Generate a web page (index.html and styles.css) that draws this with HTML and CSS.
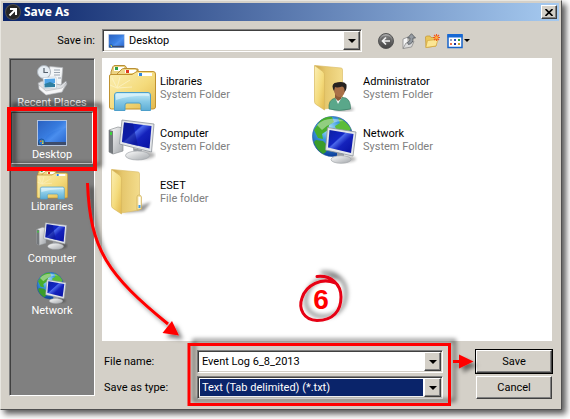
FILE: index.html
```html
<!DOCTYPE html>
<html lang="en">
<head>
<meta charset="utf-8">
<title>Save As</title>
<link rel="stylesheet" href="styles.css">
</head>
<body>
<svg class="defs" aria-hidden="true">
  <defs>
    <linearGradient id="gold" x1="0" y1="0" x2="1" y2="1"><stop offset="0" stop-color="#fbefb4"/><stop offset=".55" stop-color="#f4db7c"/><stop offset="1" stop-color="#e2b84e"/></linearGradient>
    <linearGradient id="goldBack" x1="0" y1="0" x2="1" y2="0"><stop offset="0" stop-color="#cda548"/><stop offset=".4" stop-color="#e6c86e"/><stop offset="1" stop-color="#f3dc8c"/></linearGradient>
    <linearGradient id="aqua" x1="0" y1="0" x2="0" y2="1"><stop offset="0" stop-color="#c9ecf8"/><stop offset=".5" stop-color="#86c9e6"/><stop offset="1" stop-color="#5dacd4"/></linearGradient>
    <linearGradient id="screen" x1="0" y1="0" x2="1" y2="1"><stop offset="0" stop-color="#0a1ea0"/><stop offset=".38" stop-color="#1226c4"/><stop offset=".42" stop-color="#4a68ea"/><stop offset=".6" stop-color="#1422bc"/><stop offset="1" stop-color="#0610a0"/></linearGradient>
    <linearGradient id="metal" x1="0" y1="0" x2="1" y2="1"><stop offset="0" stop-color="#fdfdfd"/><stop offset="1" stop-color="#a4a8ac"/></linearGradient>
    <radialGradient id="ocean" cx=".4" cy=".3" r=".7"><stop offset="0" stop-color="#b8e8fa"/><stop offset=".4" stop-color="#3c9be0"/><stop offset="1" stop-color="#0c3f9c"/></radialGradient>
    <linearGradient id="desk" x1="0" y1="0" x2="1" y2="1"><stop offset="0" stop-color="#1f55b8"/><stop offset=".45" stop-color="#2f74dc"/><stop offset=".6" stop-color="#4a8eee"/><stop offset="1" stop-color="#2560c8"/></linearGradient>
    <radialGradient id="orb" cx=".5" cy=".2" r=".8"><stop offset="0" stop-color="#bdbdbd"/><stop offset="1" stop-color="#3c3c3c"/></radialGradient>
    <filter id="soft" x="-30%" y="-30%" width="160%" height="160%"><feGaussianBlur stdDeviation="1.5"/></filter>
    <filter id="drop" filterUnits="userSpaceOnUse" x="0" y="0" width="570" height="419"><feDropShadow dx="4" dy="4" stdDeviation="2" flood-color="#000" flood-opacity=".5"/></filter>
    <filter id="lift" filterUnits="userSpaceOnUse" x="0" y="0" width="570" height="419"><feDropShadow dx="5" dy="-4" stdDeviation="2" flood-color="#000" flood-opacity=".5"/></filter>

    <symbol id="i-libraries" viewBox="0 0 48 48">
      <path d="M3 8 5 2.500Q5.500 1.500 7 1.500H16Q17.500 1.500 18 3L19 5H30V40H3Z" fill="#ecd383" stroke="#b98f34"/>
      <rect x="6" y="3" width="10" height="4" fill="#fff"/><rect x="7" y="3" width="3" height="3" fill="#2ca04a"/>
      <path d="M8 11 13 6Q14 4.500 16 4.500H27Q29 4.500 30 7L31 8H41V40H8Z" fill="#efd88a" stroke="#b98f34"/>
      <rect x="17" y="6" width="11" height="3" fill="#fff"/><rect x="18" y="6" width="3" height="3" fill="#e03a20"/>
      <path d="M1.500 12Q1.500 10.500 3 10.500H24L28 8Q29 7.500 31 7.500H45Q47.500 7.500 47.500 10V43Q47.500 45 45 45H3.500Q1.500 45 1.500 43Z" fill="url(#gold)" stroke="#c0922f"/>
      <rect x="30" y="9" width="14" height="3" fill="#fff"/><rect x="31" y="9" width="3" height="3" fill="#2f86e0"/>
      <path d="M9 24 4 14M9 24 12 13M9 24 22 16M9 24 24 23M9 24 2 21" stroke="#fffbe0" stroke-width="1" opacity=".5"/>
      <path d="M6.500 46V31Q6.500 28.500 9 28.500H40Q42.500 28.500 42.500 31V46.500H33V41Q33 39 31 39H19Q17 39 17 41V46.500H6.500Z" fill="url(#aqua)" stroke="#4d9fca"/>
      <path d="M8 36V30H41V32Q24 31 8 36Z" fill="#e8f8fd" opacity=".6"/>
    </symbol>

    <symbol id="i-computer" viewBox="0 0 48 48">
      <ellipse cx="36" cy="39" rx="11" ry="4" fill="#000" opacity=".3" filter="url(#soft)"/>
      <path d="M1 14 10 11 15 12V35L5 38 1 36Z" fill="url(#metal)" stroke="#8c9094" stroke-width=".7"/>
      <path d="M1 14 5 15V38L1 36Z" fill="#74787c"/><rect x="2" y="16" width="2" height="3" fill="#3bd23b"/>
      <path d="M25 32 34 34 33 39H26Z" fill="#989ca2"/>
      <ellipse cx="29.500" cy="39.500" rx="12" ry="4.500" fill="url(#metal)" stroke="#a4a8ac" stroke-width=".7"/>
      <path d="M14 4 46 8 43.500 36 11.500 28Z" fill="#e3e6ea" stroke="#8d9399" stroke-width=".8"/>
      <path d="M16 6.500 43.500 10 41.500 32.500 14 26Z" fill="url(#screen)"/>
      <path d="M16 6.500 25 7.600 30 30 14 26Z" fill="#0b1690" opacity=".55"/>
    </symbol>

    <symbol id="i-network" viewBox="0 0 48 48">
      <circle cx="21.500" cy="20.500" r="20" fill="url(#ocean)" stroke="#1b4f9c" stroke-width=".6"/>
      <path d="M9 5Q15 0 21 1L23 6 18 9 17 14 11 18 12 23 7 22 3 14Z" fill="#48ae2c"/>
      <path d="M27 2Q36 5 40 13L36 17 30 14 26 16 24 10 29 7Z" fill="#5cbc38"/>
      <path d="M5 24 12 25 17 30 15 36 12 38Q5 33 3 26Z" fill="#3a9c2a"/>
      <path d="M6 9Q16 -1 33 5Q20 5 11 14Z" fill="#fff" opacity=".4"/>
      <ellipse cx="36" cy="43" rx="9" ry="3" fill="#000" opacity=".3" filter="url(#soft)"/>
      <path d="M26 36 33 38 33 43H26Z" fill="#989ca2"/>
      <ellipse cx="30" cy="43.500" rx="10" ry="3.800" fill="url(#metal)" stroke="#a4a8ac" stroke-width=".7"/>
      <path d="M16.500 11.500 45 16 42 40 14.500 34Z" fill="#e3e6ea" stroke="#8d9399" stroke-width=".8"/>
      <path d="M18.500 14 42.500 18 40 37 17 31.500Z" fill="url(#screen)"/>
    </symbol>

    <symbol id="i-folder" viewBox="0 0 48 48">
      <path d="M14 45 31 38 43 34 36 43Z" fill="#000" opacity=".4" filter="url(#soft)"/>
      <path d="M4 1.500 30 4Q31.500 4 31.500 6V42L13 45Z" fill="url(#goldBack)" stroke="#dcbf6a" stroke-width=".7"/>
      <path d="M29 29Q29 27 31 27T33.500 29V41L29 42Z" fill="#f6e6a6" stroke="#c9a44c" stroke-width=".6"/>
      <rect x="30.500" y="29" width="2" height="10" fill="#fff"/><rect x="30.500" y="37" width="2" height="3" fill="#3f9bea"/>
      <path d="M3.500 1.500 12 7.500Q13.500 9 13.500 11V46L4.500 40Q3.500 39 3.500 37Z" fill="url(#gold)" stroke="#d9b95e" stroke-width=".7"/>
    </symbol>

    <symbol id="i-user" viewBox="0 0 48 48">
      <path d="M4 1.500 30 4Q31.500 4 31.500 6V42L13 45Z" fill="url(#goldBack)" stroke="#dcbf6a" stroke-width=".7"/>
      <path d="M3.500 1.500 12 7.500Q13.500 9 13.500 11V46L4.500 40Q3.500 39 3.500 37Z" fill="url(#gold)" stroke="#d9b95e" stroke-width=".7"/>
      <ellipse cx="33" cy="45" rx="10" ry="2.500" fill="#000" opacity=".3" filter="url(#soft)"/>
      <path d="M18 45Q17 36 24 34L29 33 35 34Q40 37 39.500 45Q28 48 18 45Z" fill="#5aa78a" stroke="#34745c" stroke-width=".6"/>
      <path d="M24 33 27 40 31 33Z" fill="#f4f6f4"/>
      <path d="M24 29H32L30 35 27 37 24 34Z" fill="#8d5a38"/>
      <ellipse cx="28.500" cy="25.500" rx="5.700" ry="7.500" fill="#a97048"/>
      <path d="M22 25Q20 19 26 18.500Q33 17 35.500 20.500Q36 26 33.500 28Q34 23 31 22.500Q26 24 24 23L23 27Z" fill="#262220"/>
    </symbol>

    <symbol id="i-desktop" viewBox="0 0 32 32">
      <rect x="1.500" y="4.500" width="29" height="25" fill="url(#desk)" stroke="#b4c4de"/>
      <path d="M2 5H30V12Q14 14 8 24H2Z" fill="#7cb2fa" opacity=".12"/>
      <rect x="2" y="26" width="28" height="3" fill="#3c4c6c"/>
      <circle cx="5.500" cy="26" r="3" fill="#2b7bd0" stroke="#103c78" stroke-width=".6"/>
      <path d="M4 24.500H5.500V26H4Z" fill="#f0682c"/><path d="M6 24.500H7.500V26H6Z" fill="#8fd04a"/><path d="M6 26.500H7.500V28H6Z" fill="#fcd638"/>
    </symbol>

    <symbol id="i-recent" viewBox="0 0 32 32">
      <rect x="13" y="3" width="13" height="19" fill="#f3f5f7" stroke="#b4b8bc" stroke-width=".7" transform="rotate(5 19 12)"/>
      <path d="M18 6H24M18 8.500H24M18 11H24M22 14H25" stroke="#9aa4b0"/>
      <circle cx="8" cy="8" r="6.500" fill="#e6edf3" stroke="#aab2ba"/>
      <path d="M8 4V8.500H12" fill="none" stroke="#55606c" stroke-width="1.200"/>
      <path d="M2 19 6 17 25 21 30 17 31 20 26 28 10 31 3 25Z" fill="#dfe1e4" stroke="#96999d" stroke-width=".7"/>
      <path d="M7 13.500 20 13 20.500 24 8 24.500Z" fill="#fff" stroke="#b8c4d0" stroke-width=".6"/>
      <path d="M8.500 15 19 14.500V19L8.500 21Z" fill="#4fa4e8"/><path d="M8.500 20 14 18 19 20V23L8.500 23.500Z" fill="#2f7ea0"/>
      <path d="M3 21 10 27 26 24 30 19 26 28 10 31 3 25Z" fill="#f6f6f7" stroke="#a6a9ad" stroke-width=".5"/>
    </symbol>
  </defs>
</svg>

<main class="window">
  <header class="titlebar">
    <svg class="app-icon" viewBox="0 0 16 16" aria-hidden="true"><circle cx="8" cy="8" r="8" fill="#4a4a4a"/><circle cx="8" cy="8" r="7" fill="#262626"/><path d="M5 5H11V11M11 5 4.500 11.500" fill="none" stroke="#fff" stroke-width="2"/></svg>
    <h1>Save As</h1>
    <button class="close" type="button" aria-label="Close"><svg viewBox="0 0 8 7"><path d="M.5 0 7.500 7M7.500 0 .5 7" stroke="#000" stroke-width="1.600"/></svg></button>
  </header>

  <form class="content">
    <div class="lookin">
      <label for="lookin">Save in:</label>
      <div class="combo combo-icon">
        <svg class="combo-pic" aria-hidden="true"><use href="#i-desktop"/></svg>
        <select id="lookin"><option>Desktop</option></select>
        <span class="drop" aria-hidden="true"></span>
      </div>
      <div class="tools">
        <button type="button" aria-label="Back"><svg viewBox="0 0 16 16"><circle cx="8" cy="8" r="7.500" fill="url(#orb)" stroke="#555"/><circle cx="8" cy="8" r="5.500" fill="#444" opacity=".5"/><path d="M12 8H5M8 4.500 4.500 8 8 11.500" fill="none" stroke="#f2f2f2" stroke-width="1.700"/></svg></button>
        <button type="button" aria-label="Up one level"><svg viewBox="0 0 16 16"><path d="M2 6 7 4V13.500L2 15.500Z" fill="#f4f4f4" stroke="#8a8a8a" stroke-width=".8"/><path d="M2 15.500 5 10 13 8.500 10.500 14Z" fill="#dcdcdc" stroke="#8a8a8a" stroke-width=".8"/><path d="M7.500 11.500Q12.500 10.500 12 5H14.500L10.500 .700 6.500 5H9Q9.500 8.500 6.500 9.500Z" fill="#959ba2" stroke="#50555a" stroke-width=".8"/></svg></button>
        <button type="button" aria-label="New folder"><svg viewBox="0 0 16 16"><path d="M1.500 4 2.500 3H6L7 4.500H12V13L2 14.500Z" fill="#eac65a" stroke="#c2932e" stroke-width=".7"/><path d="M3.500 7.500 14 6.500 12 13 1.800 14.500Z" fill="#fbe694" stroke="#d3a63c" stroke-width=".7"/><path d="M12.500 1V8M9 4.500H16M10 2 15 7M15 2 10 7" stroke="#f2581e" stroke-width="1.100"/><circle cx="12.500" cy="4.500" r="1.500" fill="#ffb03a"/></svg></button>
        <button class="view" type="button" aria-label="View menu"><svg viewBox="0 0 16 16"><rect x="1" y="2" width="14" height="12.500" fill="#fff" stroke="#1763c8" stroke-width="1.500"/><rect x=".5" y="1" width="15" height="3.500" fill="#1668d4"/><path d="M3 6H5V8H3Z" fill="#96a4c0"/><path d="M7 6H9V8H7Z" fill="#2a4ec4"/><path d="M11 6H13V8H11Z" fill="#2c9c40"/><path d="M3 10H5V12H3Z" fill="#e8744e"/><path d="M7 10H9V12H7Z" fill="#17309c"/><path d="M11 10H13V12H11Z" fill="#cf9c28"/></svg><span class="caret"></span></button>
      </div>
    </div>

    <nav class="places" aria-label="Places">
      <a href="#recent"><svg aria-hidden="true"><use href="#i-recent"/></svg>Recent Places</a>
      <a class="current" href="#desktop"><svg aria-hidden="true"><use href="#i-desktop"/></svg>Desktop</a>
      <a href="#libraries"><svg aria-hidden="true"><use href="#i-libraries"/></svg>Libraries</a>
      <a href="#computer"><svg aria-hidden="true"><use href="#i-computer"/></svg>Computer</a>
      <a href="#network"><svg aria-hidden="true"><use href="#i-network"/></svg>Network</a>
    </nav>

    <ul class="files">
      <li><svg aria-hidden="true"><use href="#i-libraries"/></svg><p>Libraries<small>System Folder</small></p></li>
      <li><svg aria-hidden="true"><use href="#i-user"/></svg><p>Administrator<small>System Folder</small></p></li>
      <li><svg aria-hidden="true"><use href="#i-computer"/></svg><p>Computer<small>System Folder</small></p></li>
      <li><svg aria-hidden="true"><use href="#i-network"/></svg><p>Network<small>System Folder</small></p></li>
      <li><svg aria-hidden="true"><use href="#i-folder"/></svg><p>ESET<small>File folder</small></p></li>
    </ul>

    <div class="fields">
      <label for="filename">File name:</label>
      <div class="combo">
        <input id="filename" type="text" value="Event Log 6_8_2013">
        <button class="drop" type="button" aria-label="Recent file names"></button>
      </div>
      <button class="action default" type="submit">Save</button>
      <label for="filetype">Save as type:</label>
      <div class="combo combo-active">
        <select id="filetype"><option>Text (Tab delimited) (*.txt)</option></select>
        <span class="drop" aria-hidden="true"></span>
      </div>
      <button class="action" type="button">Cancel</button>
    </div>
  </form>
</main>

<svg class="callouts" viewBox="0 0 570 419" aria-hidden="true">
  <g filter="url(#lift)" fill="none" stroke="#f00">
    <rect x="9" y="109" width="86" height="60" stroke-width="4"/>
    <rect x="189" y="344.500" width="260.500" height="60" stroke-width="3"/>
    <path d="M317 276.500C331 275 341 284 341 297C341 311 333 320.500 317 320.500C304 320 298 309 302 298C306 285 322 277 335 283" stroke="#e60012" stroke-width="3" stroke-linecap="round"/>
  </g>
  <g filter="url(#drop)" fill="none" stroke="#f00">
    <path d="M87.500 183C90 250 108 275 168 324" stroke-width="3"/>
    <path d="M179 335.500 162.500 333 172 321Z" fill="#f00" stroke="none"/>
    <path d="M453 361.500H462" stroke-width="3"/>
    <path d="M459 354.500 473.500 361.500 459 368.500Z" fill="#f00" stroke="none"/>
  </g>
  <text x="321" y="309" text-anchor="middle">6</text>
</svg>
</body>
</html>
```
FILE: styles.css
```css
* { box-sizing: border-box; }

body {
  margin: 0;
  padding: 0 8px 9px 0;
  background: #fff;
  color: #000;
  font: 11px/13px Roboto, Tahoma, sans-serif;
  position: relative;
}

button, input, select { font: inherit; color: inherit; }
.defs { position: absolute; width: 0; height: 0; }

.window {
  padding: 2px;
  background: #d4d0c8;
  border: 1px solid;
  border-color: #e8e6e0 #505050 #505050 #e8e6e0;
  box-shadow: 4px 4px 6px rgba(0, 0, 0, .65);
}

.titlebar {
  display: flex;
  align-items: center;
  gap: 3px;
  height: 18px;
  padding: 0 2px;
  background: linear-gradient(90deg, #0a246a, #a6caf0);
  color: #fff;
}
.titlebar h1 { flex: 1; margin: 0; font: 700 12px/16px "Noto Sans", Tahoma, sans-serif; }
.app-icon { width: 16px; height: 16px; }

.close, .drop, .action {
  background: #d4d0c8;
  border: 1px solid;
  border-color: #fff #404040 #404040 #fff;
  box-shadow: inset -1px -1px #808080;
  padding: 0;
}
.close { display: grid; place-items: center; width: 16px; height: 14px; }
.close svg { width: 8px; height: 7px; }

.content {
  display: grid;
  grid-template-columns: 86px minmax(0, 1fr);
  column-gap: 7px;
  padding: 8px 7px 8px 6px;
}

.lookin {
  grid-column: 1 / -1;
  display: grid;
  grid-template-columns: 86px minmax(0, 260px) 1fr;
  column-gap: 7px;
  align-items: center;
  margin-bottom: 6px;
}
.lookin label { text-align: right; }

.combo {
  position: relative;
  display: flex;
  height: 23px;
  padding: 1px;
  background: #fff;
  border: 1px solid;
  border-color: #808080 #fff #fff #808080;
  box-shadow: inset 1px 1px #404040, inset -1px -1px #d4d0c8;
}
.combo input, .combo select {
  flex: 1;
  min-width: 0;
  appearance: none;
  border: 0;
  outline: 0;
  margin: 1px;
  padding: 0 2px;
  background: transparent;
}
.combo-icon select { padding-left: 24px; }
.combo-pic { position: absolute; left: 5px; top: 2px; width: 17px; height: 17px; }
.combo-active select { background: #0a246a; color: #fff; }
.drop { display: grid; place-items: center; width: 17px; pointer-events: none; }
.drop::after, .caret { content: ""; border: solid transparent; border-width: 4px 4px 0; border-top-color: #000; }

.tools { display: flex; align-items: center; gap: 7px; padding-left: 9px; }
.tools button { display: flex; align-items: center; padding: 0; border: 0; background: none; }
.tools svg { width: 16px; height: 16px; }
.caret { border-width: 3px 3px 0; margin-left: 1px; }

.places {
  grid-row: 2 / span 2;
  align-self: start;
  min-height: 338px;
  background: #808080;
  border: 1px solid;
  border-color: #808080 #fff #fff #808080;
  box-shadow: inset 1px 1px #404040;
  padding: 1px;
}
.places a {
  display: flex;
  flex-direction: column;
  align-items: center;
  height: 52px;
  padding-top: 3px;
  border: 1px solid transparent;
  color: #fff;
  text-decoration: none;
  white-space: nowrap;
}
.places a.current { border-color: #404040 #fff #fff #404040; }
.places svg { width: 32px; height: 32px; flex: none; }

.files {
  display: grid;
  grid-template-columns: repeat(auto-fill, 203px);
  align-content: start;
  min-height: 283px;
  margin: 0;
  padding: 4px 6px;
  background: #fff;
  list-style: none;
}
.files li { display: flex; align-items: center; gap: 4px; height: 52px; }
.files svg { width: 48px; height: 48px; }
.files p { margin: 0; }
.files small { display: block; font-size: inherit; color: #808080; }

.fields {
  display: grid;
  grid-template-columns: 88px minmax(0, 1fr) 76px;
  column-gap: 7px;
  row-gap: 3px;
  align-items: center;
  padding-top: 9px;
}
.fields label { padding-left: 2px; }
.fields .combo { margin-right: 26px; }
.action { height: 23px; }
.default { outline: 1px solid #000; border-color: #fff #404040 #404040 #fff; }

.callouts { position: absolute; left: 0; top: 0; width: 570px; height: 419px; pointer-events: none; }
.callouts text { font: 700 28px "Liberation Sans", Arial, sans-serif; fill: #f00; }
```
